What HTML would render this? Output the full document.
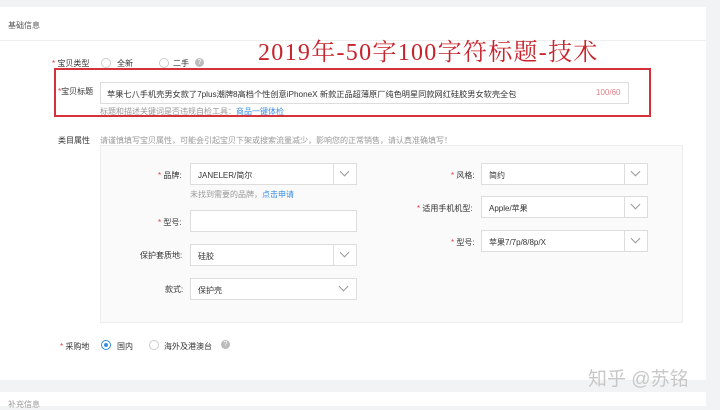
<!DOCTYPE html>
<html><head><meta charset="utf-8"><style>
*{margin:0;padding:0;box-sizing:border-box}
body{width:720px;height:406px;overflow:hidden;background:#f2f3f4;font-family:"Liberation Sans","Noto Sans CJK SC",sans-serif;font-size:8px;color:#333;position:relative}
.a{position:absolute;white-space:nowrap}
.g{color:#999}
.r{color:#e4393c}
.sel{position:absolute;background:#fff;border:1px solid #ddd;height:22px}
.sel span{position:absolute;left:7px;top:6px}
.arr{position:absolute;right:0;top:0;width:23px;height:20px;border-left:1px solid #ddd}
.arr:after{content:"";position:absolute;left:7px;top:4px;width:6px;height:6px;border-right:1px solid #999;border-bottom:1px solid #999;transform:rotate(45deg)}
.rad{position:absolute;width:10px;height:10px;border:1px solid #ccc;border-radius:50%;background:#fff}
.q{position:absolute;width:9px;height:9px;border-radius:50%;background:#bbb;color:#fff;font-size:7px;text-align:center;line-height:9px}
</style></head><body>
<div class="a" style="left:0;top:7px;width:706px;height:373px;background:#fff"></div>
<div class="a" style="left:0;top:392px;width:706px;height:14px;background:#fff"></div>
<div class="a" style="left:0;top:40px;width:706px;height:1px;background:#eee"></div>
<div class="a" style="left:8px;top:20px;color:#555">基础信息</div>
<div class="a" style="left:258px;top:32px;font-family:'Liberation Serif','Noto Serif CJK SC',serif;font-size:24px;letter-spacing:1.3px;color:#c8232c">2019年-50字100字符标题-技术</div>
<div class="a" style="left:52px;top:58px"><span class="r">*</span> 宝贝类型</div>
<div class="rad" style="left:101px;top:58px"></div><div class="a" style="left:117px;top:58px">全新</div>
<div class="rad" style="left:159px;top:58px"></div><div class="a" style="left:173px;top:58px">二手</div>
<div class="q" style="left:195px;top:58px">?</div>
<div class="a" style="left:54px;top:68px;width:597px;height:49px;border:2px solid #d5313a"></div>
<div class="a" style="left:58px;top:86px"><span class="r">*</span>宝贝标题</div>
<div class="a" style="left:100px;top:82px;width:529px;height:22px;border:1px solid #ddd"></div>
<div class="a" style="left:107px;top:88px;font-size:8.2px">苹果七八手机壳男女款了7plus潮牌8高档个性创意iPhoneX 新款正品超薄原厂纯色明星同款网红硅胶男女软壳全包</div>
<div class="a" style="left:596px;top:88px;color:#e0808a">100/60</div>
<div class="a g" style="left:100px;top:106px">标题和描述关键词是否违规自检工具：<span style="color:#3a8ee6">商品一键体检</span></div>
<div class="a" style="left:58px;top:135px">类目属性</div>
<div class="a g" style="left:100px;top:135px">请谨慎填写宝贝属性，可能会引起宝贝下架或搜索流量减少，影响您的正常销售，请认真准确填写！</div>
<div class="a" style="left:100px;top:145px;width:583px;height:178px;background:#fafafa;border:1px solid #eee"></div>
<div class="a" style="left:158px;top:170px"><span class="r">*</span> 品牌:</div>
<div class="sel" style="left:190px;top:163px;width:167px"><span>JANELER/简尔</span><div class="arr"></div></div>
<div class="a g" style="left:190px;top:189px">未找到需要的品牌，<span style="color:#3a8ee6">点击申请</span></div>
<div class="a" style="left:158px;top:217px"><span class="r">*</span> 型号:</div>
<div class="sel" style="left:190px;top:210px;width:167px"></div>
<div class="a" style="left:140px;top:250px">保护套质地:</div>
<div class="sel" style="left:190px;top:244px;width:167px"><span>硅胶</span><div class="arr"></div></div>
<div class="a" style="left:165px;top:284px">款式:</div>
<div class="sel" style="left:190px;top:278px;width:167px"><span>保护壳</span><div class="arr" style="border-left:none"></div></div>
<div class="a" style="left:451px;top:170px"><span class="r">*</span> 风格:</div>
<div class="sel" style="left:481px;top:163px;width:167px"><span>简约</span><div class="arr"></div></div>
<div class="a" style="left:417px;top:203px"><span class="r">*</span> 适用手机机型:</div>
<div class="sel" style="left:481px;top:196px;width:167px"><span>Apple/苹果</span><div class="arr"></div></div>
<div class="a" style="left:451px;top:237px"><span class="r">*</span> 型号:</div>
<div class="sel" style="left:481px;top:230px;width:167px"><span>苹果7/7p/8/8p/X</span><div class="arr"></div></div>
<div class="a" style="left:60px;top:341px"><span class="r">*</span> 采购地</div>
<div class="rad" style="left:101px;top:340px;border-color:#3a8ee6"><div style="position:absolute;left:2px;top:2px;width:4px;height:4px;border-radius:50%;background:#3a8ee6"></div></div>
<div class="a" style="left:117px;top:341px">国内</div>
<div class="rad" style="left:149px;top:340px"></div><div class="a" style="left:164px;top:341px">海外及港澳台</div>
<div class="q" style="left:221px;top:340px">?</div>
<div class="a" style="left:588px;top:364px;font-size:19px;color:#c8c8c8">知乎 @苏铭</div>
<div class="a g" style="left:8px;top:399px">补充信息</div>
</body></html>
